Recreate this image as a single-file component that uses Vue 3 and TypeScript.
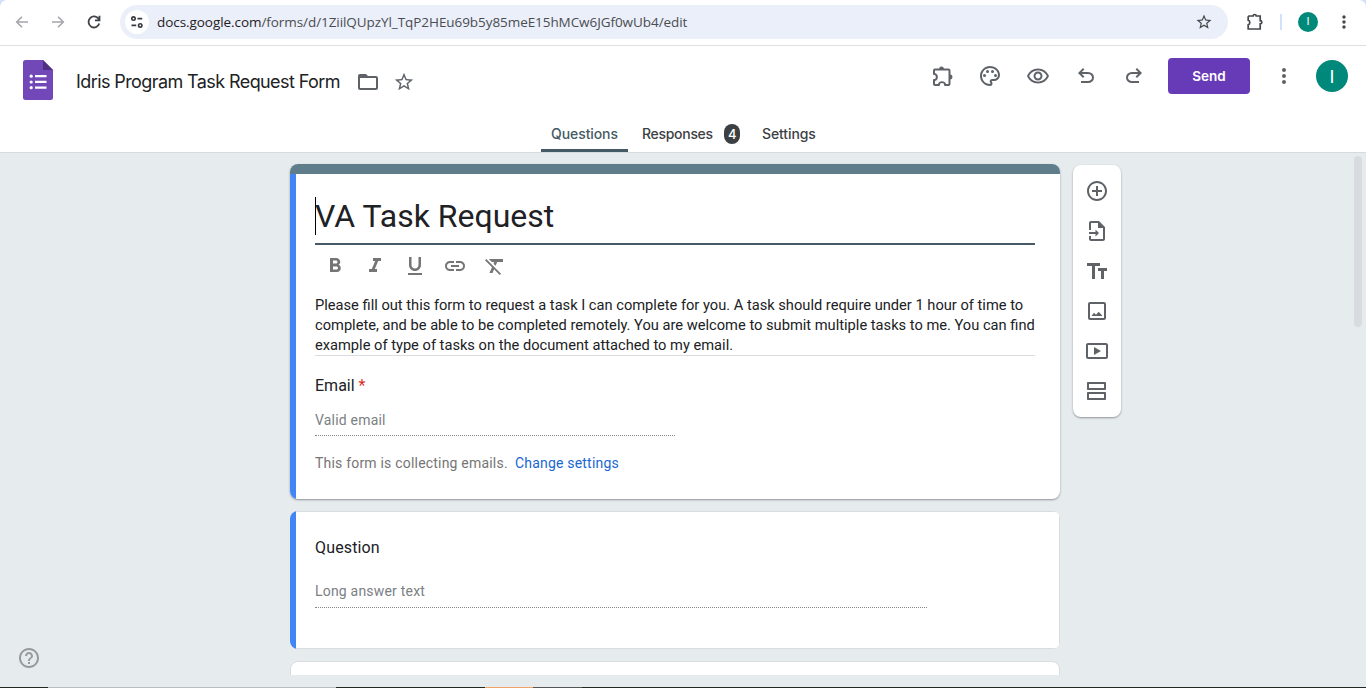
<script setup lang="ts">
interface Glyph {
  name: string
  d: string
}

const headerTools: Glyph[] = [
  { name: 'Add-ons', d: 'M11.500 2.500A2.500 2.500 0 0 0 9.050 4.500H5a2 2 0 0 0-2 2v4.200h.600a2.300 2.300 0 0 1 0 4.600H3V20a2 2 0 0 0 2 2h4.700v-.600a2.300 2.300 0 0 1 4.600 0v.600H18.500a2 2 0 0 0 2-2v-4.550a2.500 2.500 0 0 0 0-4.900V6.500a2 2 0 0 0-2-2h-4.550a2.500 2.500 0 0 0-2.450-2zM5 6.500h13.500V20h-2.450a4.300 4.300 0 0 0-8.100 0H5v-2.950a4.300 4.300 0 0 0 0-8.100z' },
  { name: 'Theme', d: 'M12 22C6.490 22 2 17.510 2 12S6.490 2 12 2s10 4.040 10 9c0 3.310-2.690 6-6 6h-1.770c-.280 0-.500.220-.500.500 0 .120.050.230.130.330.410.470.640 1.060.640 1.670A2.500 2.500 0 0 1 12 22zm0-18c-4.410 0-8 3.590-8 8s3.590 8 8 8c.280 0 .500-.220.500-.500a.540.540 0 0 0-.140-.350c-.410-.460-.630-1.050-.630-1.650a2.500 2.500 0 0 1 2.500-2.500H16c2.210 0 4-1.790 4-4 0-3.860-3.590-7-8-7zM6.500 10a1.500 1.500 0 1 0 0 3 1.500 1.500 0 0 0 0-3zM9.500 6a1.500 1.500 0 1 0 0 3 1.500 1.500 0 0 0 0-3zM14.500 6a1.500 1.500 0 1 0 0 3 1.500 1.500 0 0 0 0-3zM17.500 10a1.500 1.500 0 1 0 0 3 1.500 1.500 0 0 0 0-3z' },
  { name: 'Preview', d: 'M12 6.500c3.790 0 7.170 2.130 8.820 5.500-1.650 3.370-5.020 5.500-8.820 5.500S4.830 15.370 3.180 12C4.830 8.630 8.210 6.500 12 6.500m0-2C7 4.500 2.730 7.610 1 12c1.730 4.390 6 7.500 11 7.500s9.270-3.110 11-7.500c-1.730-4.390-6-7.500-11-7.500zm0 5c1.380 0 2.500 1.120 2.500 2.500s-1.120 2.500-2.500 2.500-2.500-1.120-2.500-2.500 1.120-2.500 2.500-2.500m0-2c-2.480 0-4.500 2.020-4.500 4.500s2.020 4.500 4.500 4.500 4.500-2.020 4.500-4.500-2.020-4.500-4.500-4.500z' },
  { name: 'Undo', d: 'M7 19v-2h7.100q1.575 0 2.737-1T18 13.500 16.837 11 14.100 10H7.800l2.600 2.600L9 14 4 9l5-5 1.400 1.400L7.800 8h6.300q2.425 0 4.163 1.575T20 13.500t-1.737 3.925T14.100 19z' },
  { name: 'Redo', d: 'M9.900 19q-2.425 0-4.163-1.575T4 13.500t1.737-3.925T9.900 8h6.300l-2.600-2.600L15 4l5 5-5 5-1.400-1.400 2.600-2.600H9.900q-1.575 0-2.737 1T6 13.500 7.163 16 9.900 17H17v2z' }
]

const formatTools: Glyph[] = [
  { name: 'Bold', d: 'M15.600 10.790c.970-.670 1.650-1.770 1.650-2.790 0-2.260-1.750-4-4-4H7v14h7.040c2.090 0 3.710-1.700 3.710-3.790 0-1.520-.860-2.820-2.150-3.420zM10 6.500h3c.830 0 1.500.670 1.500 1.500s-.670 1.500-1.500 1.500h-3v-3zm3.500 9H10v-3h3.500c.830 0 1.500.670 1.500 1.500s-.670 1.500-1.500 1.500z' },
  { name: 'Italic', d: 'M10 4v3h2.210l-3.420 8H6v3h8v-3h-2.210l3.420-8H18V4z' },
  { name: 'Underline', d: 'M12 17c3.310 0 6-2.690 6-6V3h-2.500v8c0 1.930-1.570 3.500-3.500 3.500S8.500 12.930 8.500 11V3H6v8c0 3.310 2.690 6 6 6zm-7 2v2h14v-2H5z' },
  { name: 'Link', d: 'M3.900 12c0-1.710 1.390-3.100 3.100-3.100h4V7H7c-2.760 0-5 2.240-5 5s2.240 5 5 5h4v-1.900H7c-1.710 0-3.100-1.390-3.100-3.100zM8 13h8v-2H8v2zm9-6h-4v1.900h4c1.710 0 3.100 1.390 3.100 3.100s-1.390 3.100-3.100 3.100h-4V17h4c2.760 0 5-2.240 5-5s-2.240-5-5-5z' },
  { name: 'Clear formatting', d: 'M3.270 5 2 6.270l6.970 6.970L6.500 19h3l1.570-3.660L16.730 21 18 19.730 3.550 5.270zM6 5v.180L8.820 8h2.400l-.720 1.680 2.100 2.100L14.210 8H20V5z' }
]

const sideTools: Glyph[] = [
  { name: 'Add question', d: 'M13 7h-2v4H7v2h4v4h2v-4h4v-2h-4V7zm-1-5C6.480 2 2 6.480 2 12s4.480 10 10 10 10-4.480 10-10S17.520 2 12 2zm0 18c-4.410 0-8-3.590-8-8s3.590-8 8-8 8 3.590 8 8-3.590 8-8 8z' },
  { name: 'Import questions', d: 'M14 2H6c-1.100 0-2 .900-2 2v7h2V4h7v5h5v11H6v-3H4v3c0 1.100.900 2 2 2h12c1.100 0 2-.900 2-2V8zM4 13h6.500v-2.500L14 14l-3.500 3.500V15H4z' },
  { name: 'Add title', d: 'M2 4v3h5v13h3V7h5V4zm20 5h-9v3h3v8h3v-8h3z' },
  { name: 'Add image', d: 'M19 3H5c-1.100 0-2 .900-2 2v14c0 1.100.900 2 2 2h14c1.100 0 2-.900 2-2V5c0-1.100-.900-2-2-2zm0 16H5V5h14v14zM6.500 17l2.500-3.200 2 1.900 2.700-2.900 3.800 4.200z' },
  { name: 'Add video', d: 'M9 8v8l7-4zM21 4H3c-1.100 0-2 .900-2 2v12c0 1.100.900 2 2 2h18c1.100 0 2-.900 2-2V6c0-1.100-.900-2-2-2zm0 14H3V6h18z' },
  { name: 'Add section', d: 'M19 5v4H4V5h15M20 3H3c-.600 0-1 .400-1 1v6c0 .600.400 1 1 1h17c.600 0 1-.400 1-1V4c0-.600-.400-1-1-1zm-1 12v4H4v-4h15M20 13H3c-.600 0-1 .400-1 1v6c0 .600.400 1 1 1h17c.600 0 1-.400 1-1v-6c0-.600-.400-1-1-1z' }
]

const star = 'M22 9.240l-7.190-.620L12 2 9.190 8.630 2 9.240l5.460 4.730L5.820 21 12 17.270 18.180 21l-1.630-7.030L22 9.240zM12 15.400l-3.760 2.270 1-4.280-3.320-2.880 4.380-.380L12 6.100l1.710 4.040 4.380.380-3.320 2.880 1 4.280L12 15.400z'
const dots = 'M12 8c1.100 0 2-.900 2-2s-.900-2-2-2-2 .900-2 2 .900 2 2 2zm0 2c-1.100 0-2 .900-2 2s.900 2 2 2 2-.900 2-2-.900-2-2-2zm0 6c-1.100 0-2 .900-2 2s.900 2 2 2 2-.900 2-2-.900-2-2-2z'
</script>

<template>
  <div class="window">
    <div class="chrome">
      <div class="nav">
        <svg viewBox="0 0 16 16" width="16" height="16"><path d="M14 8H3M8 2.700 2.700 8 8 13.300" /></svg>
        <svg viewBox="0 0 16 16" width="16" height="16"><path d="M2 8h11M8 2.700 13.300 8 8 13.300" /></svg>
        <svg class="reload" viewBox="0 0 16 16" width="16" height="16"><path d="M13.300 9.600A5.500 5.500 0 1 1 12.700 5M13.500 1.800v4.500H9" /></svg>
      </div>
      <div class="omnibox">
        <span class="site">
          <svg viewBox="0 0 16 16" width="16" height="16"><path d="M8.500 4.600h4.700M2.500 11.400h4.700" /><circle cx="4.500" cy="4.600" r="1.700" /><circle cx="11.200" cy="11.400" r="1.700" /></svg>
        </span>
        <span class="url"><b>docs.google.com</b>/forms/d/1ZiilQUpzYl_TqP2HEu69b5y85meE15hMCw6JGf0wUb4/edit</span>
        <svg class="bookmark" viewBox="0 0 24 24" width="18" height="18"><path :d="star" /></svg>
      </div>
      <svg class="ext" viewBox="0 0 20 20" width="20" height="20"><path d="M4 4h4.200a1.500 1.500 0 0 1 3 0H15.200v4.700a1.600 1.600 0 0 1 0 3.200V17H3.200v-4.300a2.300 2.300 0 0 0 0-4.400V4.800z" /></svg>
      <span class="divider"></span>
      <span class="avatar small">I</span>
      <svg class="menu" viewBox="0 0 24 24" width="20" height="20"><path :d="dots" /></svg>
    </div>

    <header class="header">
      <div class="bar">
        <svg class="logo" viewBox="0 0 30 40" width="30" height="40">
          <path fill="#7248b9" d="M2.500 0H20l10 10v27.500a2.500 2.500 0 0 1-2.500 2.500h-25A2.500 2.500 0 0 1 0 37.500v-35A2.500 2.500 0 0 1 2.500 0z" />
          <path fill="#503083" d="M20 0l10 10H20z" />
          <path fill="#fff" d="M12 15h11.500v2.300H12zM12 20.800h11.500v2.300H12zM12 26.500h11.500v2.300H12z" />
          <circle cx="8.200" cy="16.200" r="1.600" fill="#fff" /><circle cx="8.200" cy="22" r="1.600" fill="#fff" /><circle cx="8.200" cy="27.700" r="1.600" fill="#fff" />
        </svg>
        <span class="doc-title">Idris Program Task Request Form</span>
        <svg class="folder" viewBox="0 0 24 24" width="24" height="24"><path d="M20 6h-8l-2-2H4c-1.100 0-2 .900-2 2v12c0 1.100.900 2 2 2h16c1.100 0 2-.900 2-2V8c0-1.100-.900-2-2-2zm0 12H4V8h16v10z" /></svg>
        <svg class="star" viewBox="0 0 24 24" width="22" height="22"><path :d="star" /></svg>
        <div class="tools">
          <svg v-for="t in headerTools" :key="t.name" viewBox="0 0 24 24" width="24" height="24"><path :d="t.d" fill-rule="evenodd" /></svg>
        </div>
        <button class="send">Send</button>
        <svg class="more" viewBox="0 0 24 24" width="24" height="24"><path :d="dots" /></svg>
        <span class="avatar">I</span>
      </div>
      <nav class="tabs">
        <span class="tab active">Questions</span>
        <span class="tab responses">Responses <i>4</i></span>
        <span class="tab settings">Settings</span>
      </nav>
    </header>

    <main class="canvas">
      <div class="column">
        <section class="card intro">
          <div class="banner"></div>
          <div class="inner">
            <h1><span class="caret"></span>VA Task Request</h1>
            <div class="format">
              <svg v-for="t in formatTools" :key="t.name" viewBox="0 0 24 24" width="24" height="24"><path :d="t.d" /></svg>
            </div>
            <p class="desc">
              <span>Please fill out this form to request a task I can complete for you. A task should require under 1 hour of time to</span>
              <span>complete, and be able to be completed remotely. You are welcome to submit multiple tasks to me. You can find</span>
              <span>example of type of tasks on the document attached to my email.</span>
            </p>
            <div class="label email">Email <em>*</em></div>
            <div class="answer short">Valid email</div>
            <div class="note">This form is collecting emails. <a>Change settings</a></div>
          </div>
        </section>
        <section class="card question">
          <div class="label">Question</div>
          <div class="answer long">Long answer text</div>
        </section>
        <section class="card next"></section>
      </div>
      <aside class="side">
        <svg v-for="t in sideTools" :key="t.name" viewBox="0 0 24 24" width="24" height="24"><path :d="t.d" fill-rule="evenodd" /></svg>
      </aside>
      <div class="scroll"></div>
      <svg class="help" viewBox="0 0 24 24" width="24" height="24"><path d="M11 18h2v-2h-2v2zm1-16C6.480 2 2 6.480 2 12s4.480 10 10 10 10-4.480 10-10S17.520 2 12 2zm0 18c-4.410 0-8-3.590-8-8s3.590-8 8-8 8 3.590 8 8-3.590 8-8 8zm0-14c-2.210 0-4 1.790-4 4h2c0-1.100.900-2 2-2s2 .900 2 2c0 2-3 1.750-3 5h2c0-2.250 3-2.500 3-5 0-2.210-1.790-4-4-4z" /></svg>
    </main>
    <div class="edge"><span class="pale"></span><span class="orange"></span><span class="gray"></span></div>
  </div>
</template>

<style>
html,
body {
  overflow: hidden;
}
</style>

<style scoped>
* {
  box-sizing: border-box;
}
.window {
  width: 1366px;
  height: 688px;
  display: flex;
  flex-direction: column;
  background: linear-gradient(#d3e0f7 12px, #e6ebee 12px);
  font-family: Roboto, "Liberation Sans", sans-serif;
  overflow: hidden;
}
svg {
  display: block;
  flex: none;
  fill: #5f6368;
}
.chrome {
  height: 46px;
  flex: none;
  display: flex;
  align-items: center;
  padding: 0 12px 2px 14px;
  background: #fff;
  border-bottom: 1px solid #dddfe2;
  border-radius: 7px 7px 0 0;
}
.nav {
  display: flex;
  gap: 20px;
  width: 106px;
}
.nav svg {
  fill: none;
  stroke: #a5a7aa;
  stroke-width: 1.600;
}
.nav .reload {
  stroke: #3f4246;
  stroke-width: 1.800;
}
.omnibox {
  width: 1108px;
  height: 34px;
  border-radius: 17px;
  background: #ebeff9;
  display: flex;
  align-items: center;
  padding: 0 15px 0 5px;
}
.site {
  width: 24px;
  height: 24px;
  border-radius: 50%;
  background: #fff;
  display: grid;
  place-items: center;
}
.site svg {
  fill: none;
  stroke: #36393d;
  stroke-width: 1.600;
}
.url {
  flex: 1;
  margin-left: 8px;
  font: 13.500px/20px "Open Sans", "Noto Sans", sans-serif;
  letter-spacing: -0.065px;
  color: #4a4d52;
  white-space: nowrap;
}
.url b {
  font-weight: 400;
  color: #1f2023;
}
.bookmark {
  fill: #44474b;
}
.ext {
  margin: 0 -1px 0 17px;
  fill: none;
  stroke: #44474b;
  stroke-width: 1.700;
}
.divider {
  width: 2px;
  height: 16px;
  margin: 0 16px;
  background: #d3e2fc;
}
.avatar {
  width: 32px;
  height: 32px;
  border-radius: 50%;
  background: #00897b;
  color: #fff;
  font-size: 18px;
  display: grid;
  place-items: center;
}
.avatar.small {
  width: 20px;
  height: 20px;
  font-size: 11px;
}
.menu {
  margin-left: 16px;
  fill: #44474b;
}
.header {
  height: 107px;
  flex: none;
  background: #fff;
  border-bottom: 1px solid #d5dadd;
}
.bar {
  height: 68px;
  display: flex;
  align-items: center;
  padding: 0 18px 8px 23px;
}
.logo {
  margin-top: 8px;
}
.doc-title {
  width: 264px;
  margin: 12px 16px 0 23px;
  font-family: Inter, sans-serif;
  font-size: 18px;
  letter-spacing: -0.590px;
  line-height: 24px;
  color: #202124;
  white-space: nowrap;
}
.folder,
.star {
  margin-top: 12px;
}
.star {
  margin-left: 13px;
}
.tools {
  display: flex;
  gap: 24px;
  margin-left: auto;
}
.send {
  width: 82px;
  height: 36px;
  margin: 0 22px;
  padding: 0;
  border: 0;
  border-radius: 4px;
  background: #673ab7;
  color: #fff;
  font: 600 13.500px Inter, sans-serif;
}
.more {
  margin-right: 20px;
}
.tabs {
  height: 38px;
  display: flex;
  margin-left: 541px;
  font: 500 14px/40px Inter, sans-serif;
  letter-spacing: -0.100px;
  color: #3c4043;
}
.tab.active {
  width: 87px;
  text-align: center;
  color: #455a64;
  border-bottom: 3px solid #455a64;
  border-radius: 3px 3px 0 0;
}
.responses {
  display: flex;
  align-items: center;
  justify-content: space-between;
  width: 98px;
  margin-left: 14px;
  padding-top: 2px;
  letter-spacing: -0.300px;
}
.responses i {
  width: 16px;
  height: 20px;
  border-radius: 8px;
  background: #3c4043;
  color: #fff;
  font: 500 13px/20px Inter, sans-serif;
  text-align: center;
}
.settings {
  margin-left: 22px;
}
.canvas {
  position: relative;
  height: 522px;
  flex: none;
  display: flex;
  align-items: flex-start;
  gap: 13px;
  padding: 11px 0 0 290px;
  overflow: hidden;
}
.column {
  width: 770px;
  display: flex;
  flex-direction: column;
  gap: 12px;
}
.card {
  background: #fff;
  border: 1px solid #dadce0;
  border-radius: 8px;
  overflow: hidden;
}
.intro {
  height: 335px;
  border: 0;
  box-shadow: 0 1px 2px rgba(60, 64, 67, 0.500);
}
.banner {
  height: 10px;
  background: #607d8b;
}
.inner {
  height: 325px;
  padding: 20px 25px 0 19px;
  border-left: 6px solid #4285f4;
}
h1 {
  display: flex;
  height: 51px;
  margin: 0;
  border-bottom: 2px solid #455a64;
  font-size: 32px;
  font-weight: 400;
  line-height: 44px;
  color: #202124;
}
.caret {
  width: 1px;
  height: 38px;
  margin: 3px -1px 0 0;
  background: #000;
}
.format {
  display: flex;
  gap: 16px;
  height: 50px;
  padding: 9px 0 0 8px;
}
.format svg {
  fill: #757575;
}
.desc {
  margin: 0;
  height: 61px;
  border-bottom: 1px solid #dadce0;
  font-size: 11pt;
  line-height: 20px;
  color: #202124;
  white-space: nowrap;
}
.desc span {
  display: block;
}
.label {
  font-size: 16px;
  line-height: 24px;
  letter-spacing: 0.150px;
  color: #202124;
}
.email {
  margin-top: 18px;
  letter-spacing: 0;
}
.label em {
  font-style: normal;
  color: #d93025;
}
.answer {
  border-bottom: 1px dotted #85878a;
  font-size: 14px;
  line-height: 20px;
  letter-spacing: 0.200px;
  color: #7b8085;
}
.short {
  width: 360px;
  height: 26px;
  margin-top: 12px;
}
.note {
  margin-top: 17px;
  font-size: 14px;
  line-height: 20px;
  letter-spacing: 0.200px;
  color: #757575;
}
.note a {
  margin-left: 3.500px;
  color: #1967d2;
}
.question {
  height: 138px;
  padding: 25px 0 0 25px;
  border: 0;
  background:
    linear-gradient(#4285f4, #4285f4) 0 0 / 6px 100% no-repeat,
    linear-gradient(#dadce0, #dadce0) 0 0 / 100% 1px no-repeat,
    linear-gradient(#dadce0, #dadce0) 0 100% / 100% 1px no-repeat,
    linear-gradient(#dadce0, #dadce0) 100% 0 / 1px 100% no-repeat,
    #fff;
}
.long {
  width: 612px;
  height: 27px;
  margin-top: 21px;
}
.next {
  height: 30px;
}
.side {
  width: 48px;
  height: 252px;
  margin-top: 1px;
  padding: 14px 12px;
  display: flex;
  flex-direction: column;
  gap: 16px;
  background: #fff;
  border-radius: 8px;
  box-shadow: 0 1px 2px rgba(60, 64, 67, 0.500);
}
.scroll {
  position: absolute;
  top: 3px;
  right: 4px;
  width: 8px;
  height: 171px;
  border-radius: 4px;
  background: #d8dbdf;
}
.help {
  position: absolute;
  left: 17px;
  top: 493px;
  fill: #969a9d;
}
.edge {
  height: 1px;
  flex: none;
  display: flex;
  margin-top: auto;
  padding-left: 48px;
  background: #202a20;
}
.pale {
  width: 288px;
  background: #b8bcba;
}
.orange {
  width: 48px;
  margin-left: 149px;
  background: #f0a468;
}
.gray {
  width: 49px;
  background: #555;
}
</style>
